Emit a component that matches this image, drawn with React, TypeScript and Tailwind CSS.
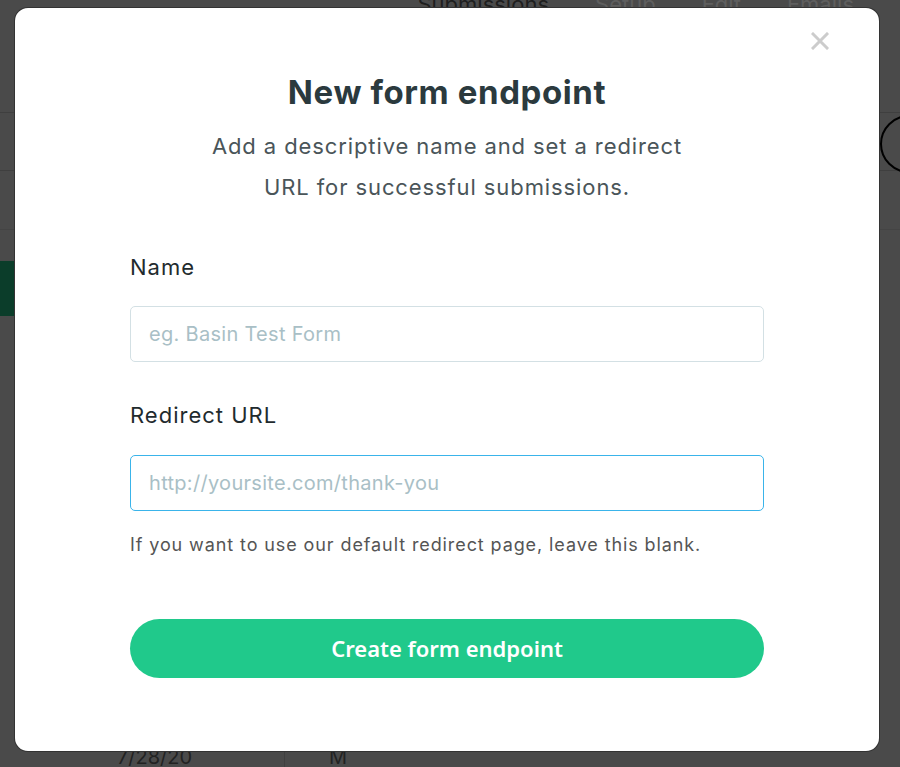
import { useEffect, useRef } from 'react';

const tabs = ['Submissions', 'Setup', 'Edit', 'Emails'];

export default function App() {
  const urlRef = useRef<HTMLInputElement>(null);

  useEffect(() => {
    urlRef.current?.focus();
  }, []);

  return (
    <div className="relative w-[900px] h-[767px] overflow-hidden bg-[#4a4a4a] font-['Inter',sans-serif]">
      {/* Page behind the overlay */}
      <div className="flex flex-col h-full">
        <div className="h-[80px] flex justify-end gap-[46px] pr-[46px] text-[22px] text-[#5e5e5e]">
          {tabs.map((tab, i) => (
            <span key={tab} className={`-mt-[12px] h-[30px] ${i === 0 ? 'text-[#1e1e1e]' : ''}`}>
              {tab}
            </span>
          ))}
        </div>
        <div className="h-[33px] border-b border-[#3f3f3f]" />
        <div className="h-[58px] border-b border-[#3f3f3f] flex justify-end">
          <div className="w-[58px] h-[58px] -mr-[38px] mt-[2px] rounded-full border-2 border-black shrink-0" />
        </div>
        <div className="h-[59px] border-b border-[#444]" />
        <div className="h-[31px]" />
        <div className="h-[55px] w-[60px] bg-[#0b3d2a]" />
        <div className="flex-1" />
        <div className="h-[22px] flex text-[20px] text-[#222] leading-none">
          <div className="w-[285px] pl-[117px] pt-[2px] border-r border-[#404040]">7/28/20</div>
          <div className="pl-[44px] pt-[2px]">M</div>
        </div>
      </div>

      {/* Modal */}
      <div className="absolute left-[14px] top-[7px] w-[866px] h-[745px] bg-white rounded-[14px] border border-black/80 flex flex-col">
        <div className="flex justify-end pt-[24px] pr-[50px]">
          <svg width="18" height="18" viewBox="0 0 18 18" className="text-[#cccccc]">
            <path d="M2 2 L16 16 M16 2 L2 16" stroke="currentColor" strokeWidth="3" strokeLinecap="square" />
          </svg>
        </div>

        <div className="flex flex-col items-center pt-[22px]">
          <h1 className="text-[33px] leading-[40px] font-bold tracking-[0.6px] text-[#2b3a3e]">New form endpoint</h1>
          <p className="mt-[14px] text-[22px] leading-[41px] tracking-[0.9px] text-[#4a5559] text-center">
            Add a descriptive name and set a redirect
            <br />
            URL for successful submissions.
          </p>
        </div>

        <form className="flex flex-col px-[115px] pt-[45px]" onSubmit={(e) => e.preventDefault()}>
          <label className="text-[22px] leading-[28px] tracking-[1px] text-[#1f2b2e]">Name</label>
          <input
            type="text"
            placeholder="eg. Basin Test Form"
            className="mt-[25px] h-[56px] rounded-[5px] border border-[#d3e0e4] px-[18px] text-[20px] tracking-[0.3px] text-[#333] placeholder:text-[#a9bfc6] outline-none"
          />

          <label className="mt-[39px] text-[22px] leading-[28px] tracking-[1px] text-[#1f2b2e]">Redirect URL</label>
          <input
            ref={urlRef}
            type="text"
            placeholder="http://yoursite.com/thank-you"
            className="mt-[26px] h-[56px] rounded-[5px] border border-[#3ab4ea] px-[18px] text-[20px] tracking-[0.3px] text-[#333] placeholder:text-[#a9bfc6] outline-none caret-black"
          />
          <p className="mt-[22px] text-[18px] leading-[24px] tracking-[0.9px] text-[#555]">
            If you want to use our default redirect page, leave this blank.
          </p>

          <button
            type="submit"
            className="mt-[62px] h-[59px] rounded-full bg-[#20c98b] text-white text-[22px] font-semibold font-['Noto_Sans',sans-serif]"
          >
            Create form endpoint
          </button>
        </form>
      </div>
    </div>
  );
}
